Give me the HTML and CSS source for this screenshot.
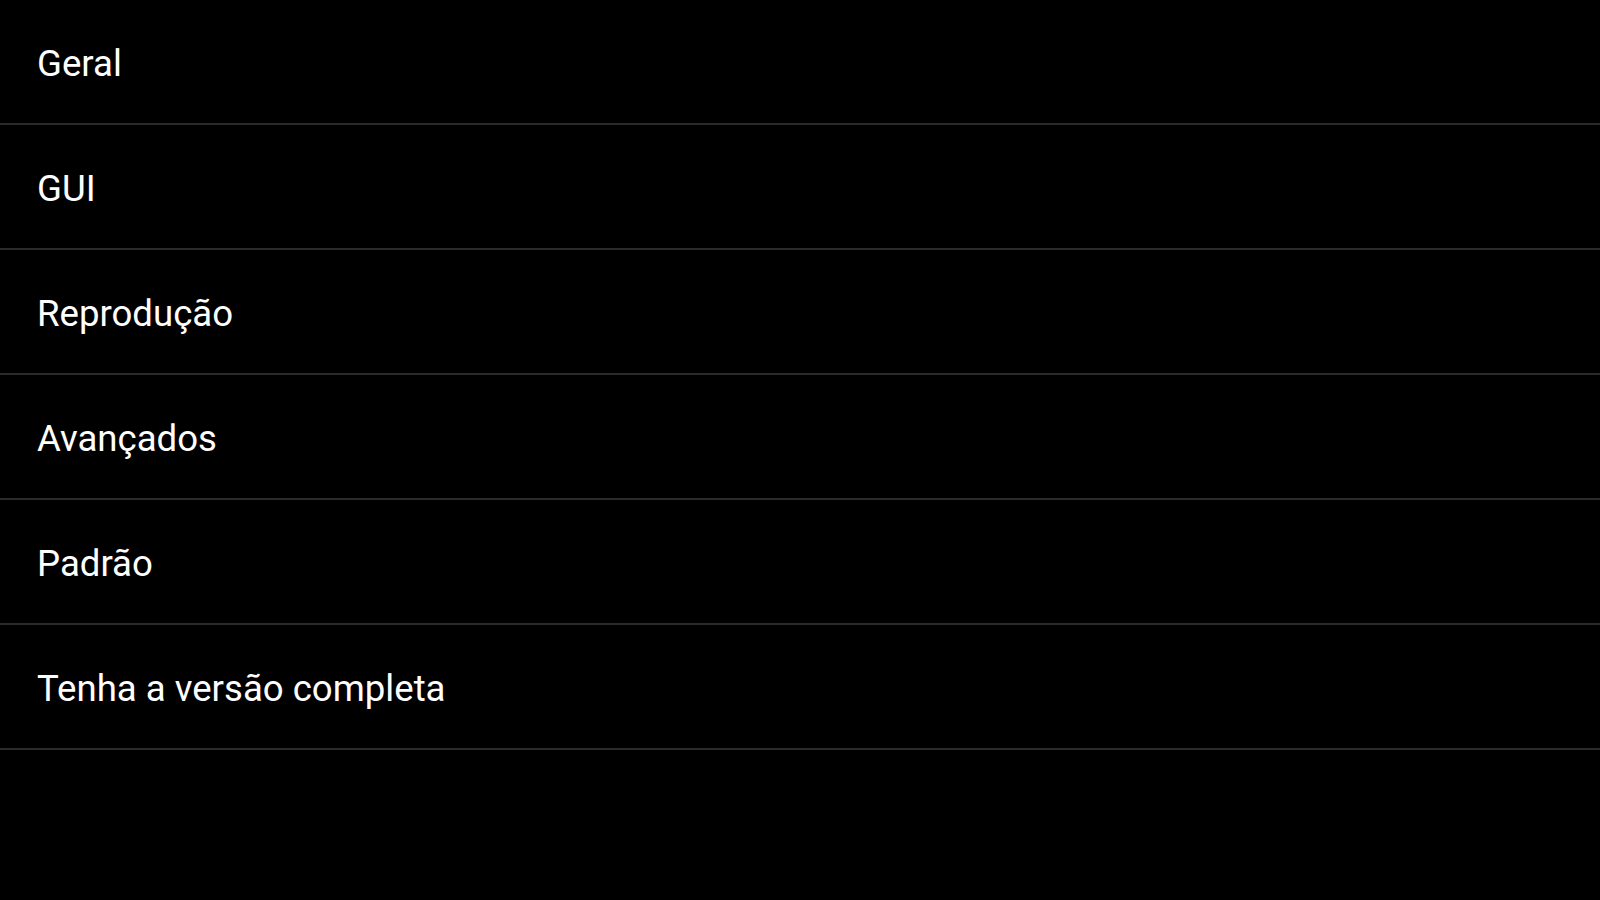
FILE: index.html
```html
<!DOCTYPE html>
<html lang="pt">
<head>
  <meta charset="UTF-8" />
  <meta name="viewport" content="width=device-width, initial-scale=1.0" />
  <title>Configurações</title>
  <link rel="stylesheet" href="styles.css">
</head>
<body>
  <ul class="settings-list">
    <li class="settings-item">Geral</li>
    <li class="settings-item">GUI</li>
    <li class="settings-item">Reprodução</li>
    <li class="settings-item">Avançados</li>
    <li class="settings-item">Padrão</li>
    <li class="settings-item">Tenha a versão completa</li>
  </ul>
</body>
</html>
```

FILE: styles.css
```css
html, body {
  background-color: #000;
  color: #fff;
  font-family: Roboto, "Noto Sans", sans-serif;
  margin: 0;
  padding: 0;
  height: 100%;
}

.settings-list {
  list-style: none;
  margin: 0;
  padding: 0;
}

.settings-item {
  height: 119px;
  display: flex;
  align-items: center;
  padding: 4px 0 0 37px;
  font-size: 36.6px;
  border-bottom: 2px solid #2a2a2a;
  cursor: pointer;
}
```
